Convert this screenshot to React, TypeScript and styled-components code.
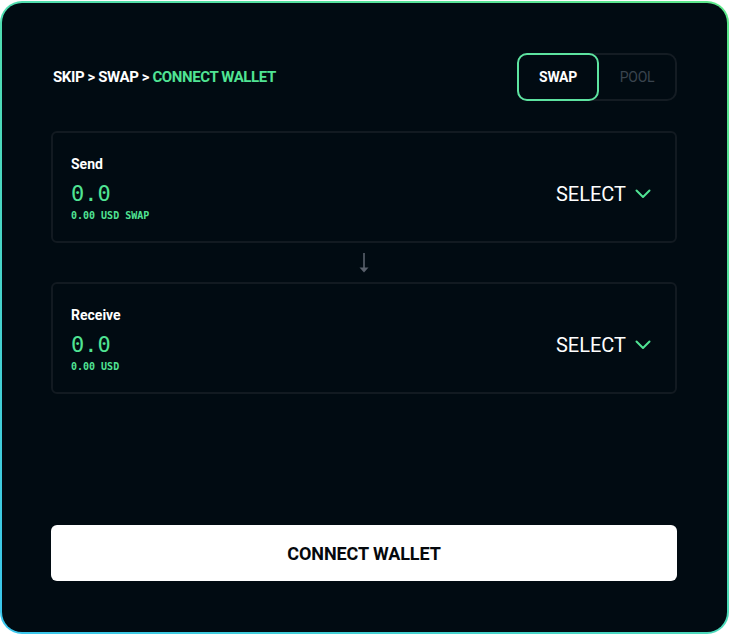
import React from "react";
import styled, { createGlobalStyle } from "styled-components";

const GlobalStyle = createGlobalStyle`
  html, body {
    margin: 0;
    padding: 0;
    background: #ffffff;
  }
  body {
    font-family: Roboto, "Liberation Sans", sans-serif;
  }
`;

const Frame = styled.div`
  width: 729px;
  height: 633px;
  margin-top: 1px;
  box-sizing: border-box;
  padding: 2px;
  border-radius: 22px;
  background: linear-gradient(215deg, #5ee88a 0%, #4edcb4 50%, #3ac6ee 100%);
`;

const Panel = styled.div`
  height: 100%;
  box-sizing: border-box;
  border-radius: 20px;
  background: #010b12;
  padding: 50px 50px 51px 49px;
  display: flex;
  flex-direction: column;
`;

const Header = styled.div`
  display: flex;
  align-items: center;
  justify-content: space-between;
  margin-bottom: 30px;
`;

const Crumbs = styled.div`
  font-size: 15px;
  font-weight: 700;
  color: #ffffff;
  letter-spacing: -0.4px;
  padding-left: 2px;
`;

const Current = styled.span`
  color: #50e494;
`;

const Tabs = styled.div`
  display: flex;
  border: 2px solid #141c23;
  border-radius: 10px;
  height: 48px;
  box-sizing: border-box;
`;

const Tab = styled.button<{ $active?: boolean }>`
  width: ${(p) => (p.$active ? "82px" : "76px")};
  margin: -2px 0 -2px ${(p) => (p.$active ? "-2px" : "0")};
  border: 2px solid ${(p) => (p.$active ? "#5de3a0" : "transparent")};
  border-radius: 10px;
  background: transparent;
  font-family: Roboto, "Liberation Sans", sans-serif;
  font-size: 14px;
  font-weight: ${(p) => (p.$active ? 700 : 400)};
  color: ${(p) => (p.$active ? "#ffffff" : "#3a444e")};
  letter-spacing: -0.3px;
  cursor: pointer;
`;

const Card = styled.div`
  height: 112px;
  box-sizing: border-box;
  border: 2px solid #121a21;
  border-radius: 6px;
  padding: 23px 24px 0 18px;
  display: flex;
  align-items: center;
  justify-content: space-between;
`;

const Amounts = styled.div`
  display: flex;
  flex-direction: column;
  align-self: flex-start;
`;

const Label = styled.div`
  font-size: 14px;
  font-weight: 700;
  color: #ffffff;
  line-height: 16px;
`;

const Amount = styled.div`
  font-family: "DejaVu Sans Mono", "Liberation Mono", monospace;
  font-size: 22px;
  color: #50e494;
  line-height: 26px;
  margin-top: 9px;
`;

const Usd = styled.div`
  font-family: "DejaVu Sans Mono", "Liberation Mono", monospace;
  font-size: 10px;
  font-weight: 700;
  color: #50e494;
  line-height: 12px;
  margin-top: 3px;
`;

const Select = styled.button`
  display: flex;
  align-items: center;
  gap: 9px;
  background: transparent;
  border: none;
  padding: 0;
  margin-top: -10px;
  font-family: Roboto, "Liberation Sans", sans-serif;
  font-size: 20px;
  color: #ffffff;
  cursor: pointer;
`;

const ArrowRow = styled.div`
  height: 39px;
  display: flex;
  align-items: center;
  justify-content: center;
`;

const ConnectButton = styled.button`
  margin-top: auto;
  height: 56px;
  border: none;
  border-radius: 6px;
  background: #ffffff;
  font-family: Roboto, "Liberation Sans", sans-serif;
  font-size: 18px;
  font-weight: 700;
  color: #05080c;
  letter-spacing: -0.1px;
  cursor: pointer;
`;

function Chevron() {
  return (
    <svg width="16" height="10" viewBox="0 0 16 10" fill="none" stroke="#50e494" strokeWidth="2" strokeLinecap="round" strokeLinejoin="round">
      <path d="M1.5 1.5l6.5 6.5 6.5-6.5" />
    </svg>
  );
}

function DownArrow() {
  return (
    <svg width="14" height="22" viewBox="0 0 14 22" fill="#59606b">
      <rect x="6.2" y="1" width="1.6" height="16" />
      <path d="M2.5 15.5h9L7 20.5z" />
    </svg>
  );
}

function TokenCard({ label, usd }: { label: string; usd: string }) {
  return (
    <Card>
      <Amounts>
        <Label>{label}</Label>
        <Amount>0.0</Amount>
        <Usd>{usd}</Usd>
      </Amounts>
      <Select>
        SELECT
        <Chevron />
      </Select>
    </Card>
  );
}

export default function App() {
  return (
    <>
      <GlobalStyle />
      <Frame>
        <Panel>
          <Header>
            <Crumbs>
              SKIP &gt; SWAP &gt; <Current>CONNECT WALLET</Current>
            </Crumbs>
            <Tabs>
              <Tab $active>SWAP</Tab>
              <Tab>POOL</Tab>
            </Tabs>
          </Header>
          <TokenCard label="Send" usd="0.00 USD SWAP" />
          <ArrowRow>
            <DownArrow />
          </ArrowRow>
          <TokenCard label="Receive" usd="0.00 USD" />
          <ConnectButton>CONNECT WALLET</ConnectButton>
        </Panel>
      </Frame>
    </>
  );
}
